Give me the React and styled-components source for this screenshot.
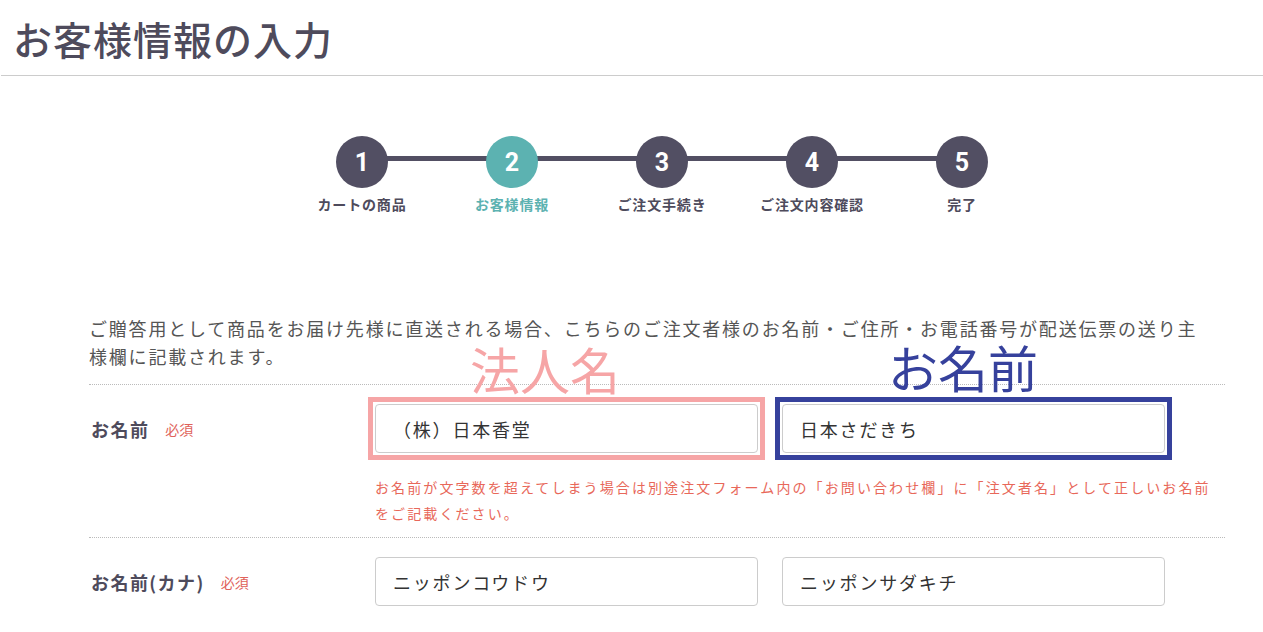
import React from 'react';
import styled, { createGlobalStyle } from 'styled-components';

const GlobalStyle = createGlobalStyle`
  body {
    margin: 0;
    background: #fff;
    font-family: 'Noto Sans CJK JP', 'Noto Sans', sans-serif;
    color: #555;
  }
`;

const Header = styled.header`
  height: 76px;
  border-bottom: 1px solid #ccc;
  margin-left: 1px;
  display: flex;
  align-items: center;
  padding: 2px 0 0 12px;
  box-sizing: border-box;
`;

const Title = styled.h1`
  margin: 0;
  font-size: 39px;
  font-weight: 500;
  line-height: 1;
  letter-spacing: 1px;
  color: #4e4b5c;
`;

const Main = styled.main`
  width: 1136px;
  margin-left: 89px;
`;

const Steps = styled.ol`
  list-style: none;
  margin: 60px 0 0;
  padding: 0 0 0 10px;
  display: flex;
  justify-content: center;
`;

const Step = styled.li`
  width: 150px;
  display: flex;
  flex-direction: column;
  align-items: center;
  position: relative;

  &:not(:first-child)::before {
    content: '';
    position: absolute;
    top: 20px;
    left: -75px;
    width: 150px;
    height: 5px;
    background: #524f63;
  }
`;

const Circle = styled.span`
  position: relative;
  z-index: 1;
  width: 52px;
  height: 52px;
  border-radius: 50%;
  background: ${(p) => (p.$active ? '#5cb2b1' : '#524f63')};
  color: #fff;
  display: flex;
  align-items: center;
  justify-content: center;
  font-family: 'Roboto', 'Liberation Sans', sans-serif;
  font-weight: 700;
  font-size: 25px;
`;

const StepLabel = styled.span`
  margin-top: 6px;
  font-size: 14px;
  line-height: 20px;
  font-weight: 700;
  letter-spacing: 0.06em;
  white-space: nowrap;
  color: ${(p) => (p.$active ? '#5cb2b1' : '#4e4b5c')};
`;

const Intro = styled.p`
  margin: 100px 0 0;
  padding-bottom: 14px;
  max-width: 1120px;
  font-size: 18px;
  line-height: 28px;
  letter-spacing: 0.1em;
  color: #555;
`;

const Row = styled.section`
  border-top: 1px dotted #bbb;
  display: grid;
  grid-template-columns: 286px 1fr;
  padding: 19px 0 11px;
`;

const LabelCell = styled.div`
  height: 49px;
  display: flex;
  align-items: center;
  padding-left: 2px;
`;

const Label = styled.span`
  font-size: 18px;
  font-weight: 700;
  letter-spacing: 0.08em;
  color: #4e4b5c;
`;

const Required = styled.span`
  margin-left: 16px;
  font-size: 14px;
  color: #e0625a;
`;

const Fields = styled.div`
  display: flex;
  gap: 24px;
`;

const Input = styled.input`
  width: 383px;
  height: 49px;
  box-sizing: border-box;
  border: 1px solid #ccc;
  border-radius: 4px;
  padding: 0 17px;
  font-family: 'Noto Sans CJK JP', 'Noto Sans', sans-serif;
  font-size: 18px;
  letter-spacing: 0.1em;
  color: #333;
  background: #fff;
  outline: none;
`;

const Highlight = styled.div`
  position: relative;
  margin: -7px;
  padding: 2px;
  border: 5px solid ${(p) => p.$color};
`;

const Annotation = styled.span`
  position: absolute;
  left: ${(p) => p.$left}px;
  bottom: ${(p) => p.$bottom}px;
  font-size: 50px;
  line-height: 1;
  font-weight: 400;
  white-space: nowrap;
  color: ${(p) => p.$color};
`;

const Note = styled.p`
  grid-column: 2;
  margin: 21px 0 0;
  font-size: 14px;
  line-height: 26px;
  letter-spacing: 0.15em;
  color: #e8685a;
`;

const steps = ['カートの商品', 'お客様情報', 'ご注文手続き', 'ご注文内容確認', '完了'];

const marks = {
  corp: { color: '#f6a5a6', text: '法人名', left: 97, bottom: 62 },
  name: { color: '#36419c', text: 'お名前', left: 108, bottom: 64 },
};

const Marked = ({ mark, value }) => (
  <Highlight $color={mark.color}>
    <Annotation $color={mark.color} $left={mark.left} $bottom={mark.bottom}>
      {mark.text}
    </Annotation>
    <Input value={value} readOnly />
  </Highlight>
);

const App = () => {
  return (
    <>
      <GlobalStyle />
      <Header>
        <Title>お客様情報の入力</Title>
      </Header>
      <Main>
        <Steps>
          {steps.map((s, i) => (
            <Step key={s}>
              <Circle $active={i === 1}>{i + 1}</Circle>
              <StepLabel $active={i === 1}>{s}</StepLabel>
            </Step>
          ))}
        </Steps>
        <Intro>
          ご贈答用として商品をお届け先様に直送される場合、こちらのご注文者様のお名前・ご住所・お電話番号が配送伝票の送り主様欄に記載されます。
        </Intro>
        <Row>
          <LabelCell>
            <Label>お名前</Label>
            <Required>必須</Required>
          </LabelCell>
          <Fields>
            <Marked mark={marks.corp} value="（株）日本香堂" />
            <Marked mark={marks.name} value="日本さだきち" />
          </Fields>
          <Note>
            お名前が文字数を超えてしまう場合は別途注文フォーム内の「お問い合わせ欄」に「注文者名」として正しいお名前をご記載ください。
          </Note>
        </Row>
        <Row>
          <LabelCell>
            <Label>お名前(カナ)</Label>
            <Required>必須</Required>
          </LabelCell>
          <Fields>
            <Input value="ニッポンコウドウ" readOnly />
            <Input value="ニッポンサダキチ" readOnly />
          </Fields>
        </Row>
      </Main>
    </>
  );
};

export default App;
